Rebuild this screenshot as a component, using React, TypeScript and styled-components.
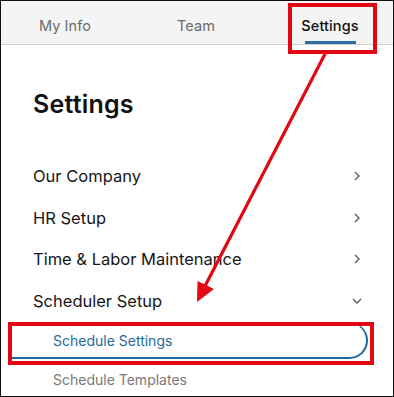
import React from 'react';
import styled, { createGlobalStyle, css } from 'styled-components';

const RED = '#e30613';
const BLUE = '#1f6a9c';

const GlobalStyle = createGlobalStyle`
    html, body {
        margin: 0;
        padding: 0;
        background: #fff;
    }
    body {
        font-family: 'Inter', 'Liberation Sans', sans-serif;
        -webkit-font-smoothing: antialiased;
    }
`;

const Frame = styled.div`
    position: relative;
    width: 394px;
    height: 397px;
    box-sizing: border-box;
    border: 1px solid #111;
    overflow: hidden;
    background: #fff;
`;

const TabBar = styled.div`
    display: grid;
    grid-template-columns: 128px 134px 134px;
    height: 43px;
    background: #f4f4f4;
    border-bottom: 1px solid #cfcfcf;
`;

const Tab = styled.div<{ active?: boolean }>`
    position: relative;
    display: flex;
    align-items: center;
    justify-content: center;
    padding-top: 5px;
    font-size: 14.5px;
    color: #6b6b6b;
    letter-spacing: 0.1px;

    ${props =>
        props.active &&
        css`
            color: #111;
            font-weight: 500;

            &::after {
                content: '';
                position: absolute;
                left: 50%;
                bottom: 0;
                width: 51px;
                margin-left: -25px;
                height: 3px;
                background: #2f6ea5;
            }
        `}
`;

const Content = styled.div`
    padding: 43px 32px 0 32px;
`;

const Heading = styled.h1`
    margin: 0 0 35px 0;
    font-size: 25px;
    line-height: 32px;
    font-weight: 600;
    color: #111;
    letter-spacing: 0.2px;
`;

const MenuList = styled.div`
    display: flex;
    flex-direction: column;
`;

const MenuRow = styled.div`
    display: flex;
    align-items: center;
    justify-content: space-between;
    height: 41.7px;
    font-size: 16.5px;
    color: #161616;
`;

const Chevron = styled.svg`
    width: 12px;
    height: 12px;
    margin-right: -2px;
    color: #555;
`;

const SubItem = styled.div<{ active?: boolean }>`
    display: flex;
    align-items: center;
    margin: 0 -7px 0 -22px;
    padding-left: 42px;
    height: 42px;
    box-sizing: border-box;
    font-size: 14px;
    color: #7a7a7a;

    ${props =>
        props.active &&
        css`
            height: 37px;
            padding-top: 2px;
            color: ${BLUE};
            border-bottom: 2px solid ${BLUE};
            border-right: 2px solid ${BLUE};
            border-top: 1px solid transparent;
            border-radius: 0 19px 19px 0;
        `}
`;

const Highlight = styled.div<{ top: number; left: number; width: number; height: number }>`
    position: absolute;
    top: ${p => p.top}px;
    left: ${p => p.left}px;
    width: ${p => p.width}px;
    height: ${p => p.height}px;
    box-sizing: border-box;
    border: 4px solid ${RED};
    pointer-events: none;
`;

const ArrowLayer = styled.svg`
    position: absolute;
    top: -1px;
    left: -1px;
    width: 394px;
    height: 397px;
    pointer-events: none;
`;

const ChevronIcon = ({ down }: { down?: boolean }) => (
    <Chevron viewBox="0 0 12 12" fill="none">
        {down ? (
            <path d="M2 4 L6 8 L10 4" stroke="currentColor" strokeWidth="1.3" />
        ) : (
            <path d="M4 2 L8 6 L4 10" stroke="currentColor" strokeWidth="1.3" />
        )}
    </Chevron>
);

const menu = ['Our Company', 'HR Setup', 'Time & Labor Maintenance'];

export default function App() {
    return (
        <>
            <GlobalStyle />
            <Frame>
                <TabBar>
                    <Tab>My Info</Tab>
                    <Tab>Team</Tab>
                    <Tab active>Settings</Tab>
                </TabBar>
                <Content>
                    <Heading>Settings</Heading>
                    <MenuList>
                        {menu.map(label => (
                            <MenuRow key={label}>
                                {label}
                                <ChevronIcon />
                            </MenuRow>
                        ))}
                        <MenuRow>
                            Scheduler Setup
                            <ChevronIcon down />
                        </MenuRow>
                        <SubItem active>Schedule Settings</SubItem>
                        <SubItem>Schedule Templates</SubItem>
                    </MenuList>
                </Content>

                <Highlight top={2} left={287} width={89} height={51} />
                <Highlight top={321} left={7} width={366} height={43} />
                <ArrowLayer viewBox="0 0 394 397">
                    <line x1="326" y1="52" x2="204" y2="288" stroke={RED} strokeWidth="3.2" />
                    <polygon points="197,302 214,289 197.5,281" fill={RED} />
                </ArrowLayer>
            </Frame>
        </>
    );
}
